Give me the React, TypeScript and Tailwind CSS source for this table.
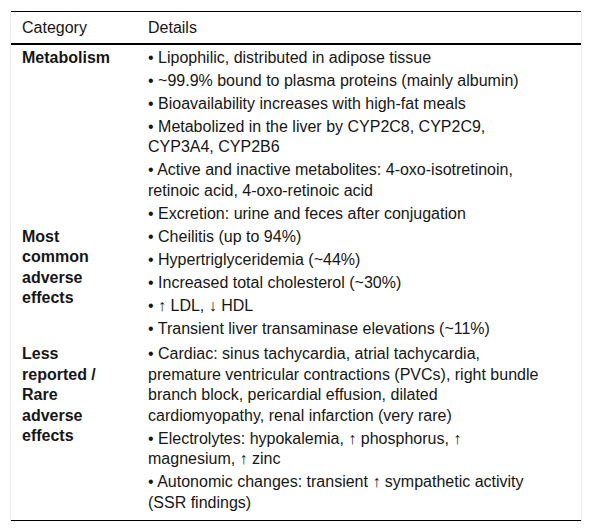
import React from "react"

type Row = {
  label: string
  items: string[]
  rowClass: string
}

const rows: Row[] = [
  {
    label: "Metabolism",
    rowClass: "pt-[1.5px]",
    items: [
      "• Lipophilic, distributed in adipose tissue",
      "• ~99.9% bound to plasma proteins (mainly albumin)",
      "• Bioavailability increases with high-fat meals",
      "• Metabolized in the liver by CYP2C8, CYP2C9, CYP3A4, CYP2B6",
      "• Active and inactive metabolites: 4-oxo-isotretinoin, retinoic acid, 4-oxo-retinoic acid",
      "• Excretion: urine and feces after conjugation",
    ],
  },
  {
    label: "Most common adverse effects",
    rowClass: "",
    items: [
      "• Cheilitis (up to 94%)",
      "• Hypertriglyceridemia (~44%)",
      "• Increased total cholesterol (~30%)",
      "• ↑ LDL, ↓ HDL",
      "• Transient liver transaminase elevations (~11%)",
    ],
  },
  {
    label: "Less reported / Rare adverse effects",
    rowClass: "pt-[2.5px] pb-[5px]",
    items: [
      "• Cardiac: sinus tachycardia, atrial tachycardia, premature ventricular contractions (PVCs), right bundle branch block, pericardial effusion, dilated cardiomyopathy, renal infarction (very rare)",
      "• Electrolytes: hypokalemia, ↑ phosphorus, ↑ magnesium, ↑ zinc",
      "• Autonomic changes: transient ↑ sympathetic activity (SSR findings)",
    ],
  },
]

const App = () => {
  return (
    <div className="min-h-[531px] bg-white pt-[11px] pl-[10px] font-['Liberation_Sans',Arial,sans-serif] text-[16px] text-[#161616]">
      {/* table wrapper with faint side borders */}
      <div className="w-[572px] border-x border-[#ebebeb]">
        <table className="w-full border-collapse border-y border-black">
          <thead>
            <tr className="border-b-2 border-black">
              <th className="w-[126px] pl-[11px] py-[5px] text-left font-normal leading-[21px]">
                Category
              </th>
              <th className="pl-[11px] py-[5px] text-left font-normal leading-[21px]">
                Details
              </th>
            </tr>
          </thead>
          <tbody>
            {rows.map((row) => (
              <tr key={row.label}>
                <td className={`w-[126px] pl-[11px] pr-[24px] align-top ${row.rowClass}`}>
                  <div className="py-[1.25px] font-bold leading-[20.5px]">{row.label}</div>
                </td>
                <td className={`pl-[11px] pr-[41px] align-top ${row.rowClass}`}>
                  {row.items.map((item) => (
                    <div key={item} className="py-[1.25px] leading-[20.5px]">
                      {item}
                    </div>
                  ))}
                </td>
              </tr>
            ))}
          </tbody>
        </table>
      </div>
    </div>
  )
}

export default App
